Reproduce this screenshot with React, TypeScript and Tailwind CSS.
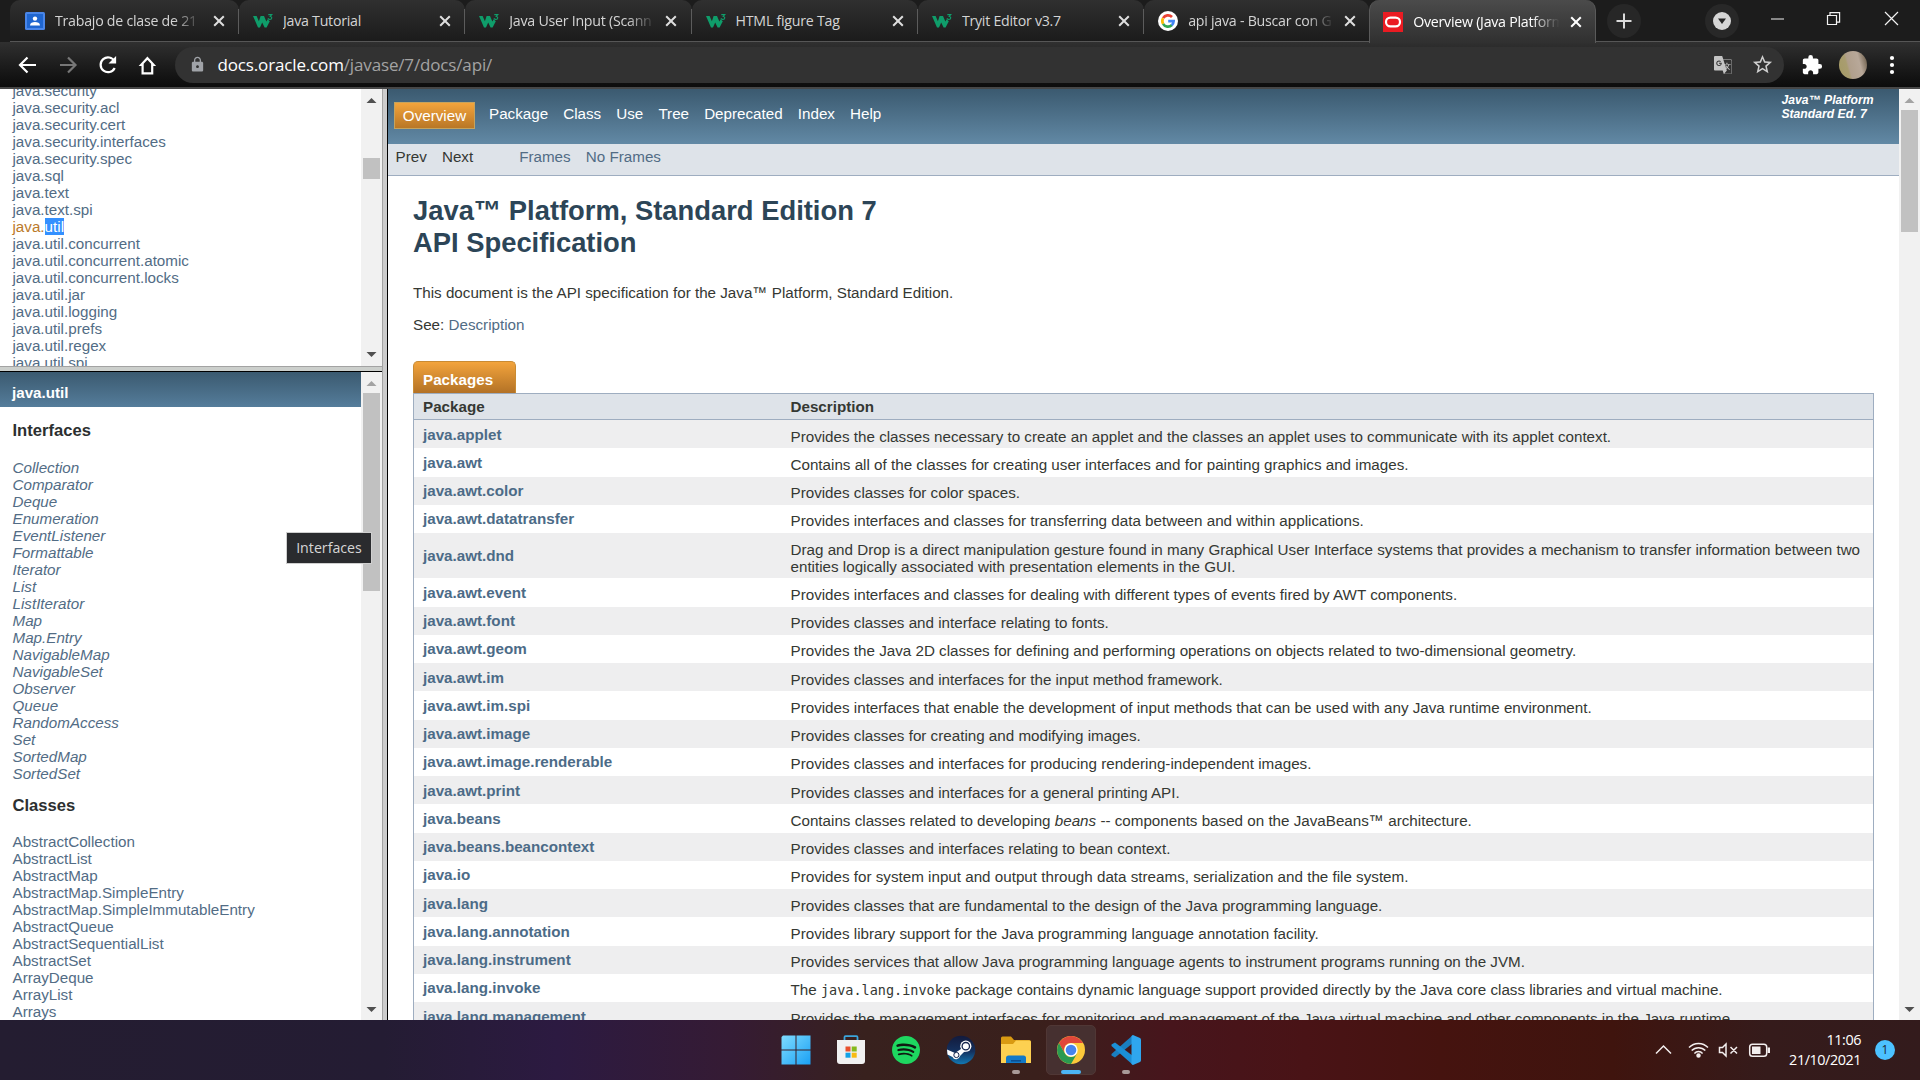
import type { ReactNode } from "react";
import { SiSpotify, SiGoogletranslate } from "react-icons/si";
import { MdExtension, MdStarBorder, MdLock } from "react-icons/md";

const packages = [
  "java.security", "java.security.acl", "java.security.cert", "java.security.interfaces", "java.security.spec",
  "java.sql", "java.text", "java.text.spi", "java.util", "java.util.concurrent", "java.util.concurrent.atomic",
  "java.util.concurrent.locks", "java.util.jar", "java.util.logging", "java.util.prefs", "java.util.regex", "java.util.spi",
];
const interfaces = [
  "Collection", "Comparator", "Deque", "Enumeration", "EventListener", "Formattable", "Iterator", "List", "ListIterator",
  "Map", "Map.Entry", "NavigableMap", "NavigableSet", "Observer", "Queue", "RandomAccess", "Set", "SortedMap", "SortedSet",
];
const classes = [
  "AbstractCollection", "AbstractList", "AbstractMap", "AbstractMap.SimpleEntry", "AbstractMap.SimpleImmutableEntry",
  "AbstractQueue", "AbstractSequentialList", "AbstractSet", "ArrayDeque", "ArrayList", "Arrays",
];
const rows: [string, ReactNode][] = [
  ["java.applet", "Provides the classes necessary to create an applet and the classes an applet uses to communicate with its applet context."],
  ["java.awt", "Contains all of the classes for creating user interfaces and for painting graphics and images."],
  ["java.awt.color", "Provides classes for color spaces."],
  ["java.awt.datatransfer", "Provides interfaces and classes for transferring data between and within applications."],
  ["java.awt.dnd", "Drag and Drop is a direct manipulation gesture found in many Graphical User Interface systems that provides a mechanism to transfer information between two entities logically associated with presentation elements in the GUI."],
  ["java.awt.event", "Provides interfaces and classes for dealing with different types of events fired by AWT components."],
  ["java.awt.font", "Provides classes and interface relating to fonts."],
  ["java.awt.geom", "Provides the Java 2D classes for defining and performing operations on objects related to two-dimensional geometry."],
  ["java.awt.im", "Provides classes and interfaces for the input method framework."],
  ["java.awt.im.spi", "Provides interfaces that enable the development of input methods that can be used with any Java runtime environment."],
  ["java.awt.image", "Provides classes for creating and modifying images."],
  ["java.awt.image.renderable", "Provides classes and interfaces for producing rendering-independent images."],
  ["java.awt.print", "Provides classes and interfaces for a general printing API."],
  ["java.beans", <>Contains classes related to developing <i>beans</i> -- components based on the JavaBeans™ architecture.</>],
  ["java.beans.beancontext", "Provides classes and interfaces relating to bean context."],
  ["java.io", "Provides for system input and output through data streams, serialization and the file system."],
  ["java.lang", "Provides classes that are fundamental to the design of the Java programming language."],
  ["java.lang.annotation", "Provides library support for the Java programming language annotation facility."],
  ["java.lang.instrument", "Provides services that allow Java programming language agents to instrument programs running on the JVM."],
  ["java.lang.invoke", <>The <code className="font-['DejaVu_Sans_Mono',monospace] text-[13.5px]">java.lang.invoke</code> package contains dynamic language support provided directly by the Java core class libraries and virtual machine.</>],
  ["java.lang.management", "Provides the management interfaces for monitoring and management of the Java virtual machine and other components in the Java runtime."],
];

function W3() {
  return (
    <svg viewBox="0 0 20 18" className="h-[18px] w-5 shrink-0" fill="none">
      <path d="M0 4H3.6L5.9 9.2L7.6 4H11L13.4 9.4L14.6 7.2L16.8 9.2L13.6 15.4H11.6L9.2 10.4L7 15.4H5Z" fill="#0f9d6a" />
      <path d="M15.3 2.6H18.8L17.2 4.4C19.4 4.8 19.2 7.4 16.9 7.4C15.9 7.4 15.3 6.900 15 6.200" stroke="#0f9d6a" strokeWidth="1.1" />
    </svg>
  );
}
function Classroom() {
  return (
    <svg viewBox="0 0 20 18" className="h-[18px] w-5 shrink-0">
      <rect width="20" height="18" rx="1.5" fill="#4a86e8" />
      <rect x="2" y="2" width="16" height="14" fill="#1f66d0" />
      <circle cx="10" cy="6.6" r="2.2" fill="#fff" />
      <path d="M5 13.4C5 9 15 9 15 13.4Z" fill="#fff" />
    </svg>
  );
}
function Google() {
  return (
    <svg viewBox="0 0 20 20" className="size-5 shrink-0" fill="none">
      <circle cx="10" cy="10" r="10" fill="#fff" />
      <g strokeWidth="2.7">
        <path d="M5.1 7.2A5.6 5.6 0 0 1 14 6" stroke="#ea4335" />
        <path d="M5.1 12.8A5.6 5.6 0 0 1 5.1 7.2" stroke="#fbbc05" />
        <path d="M13.9 14A5.6 5.6 0 0 1 5.1 12.8" stroke="#34a853" />
        <path d="M10.2 10.2H15.6A5.6 5.6 0 0 1 13.7 14.2" stroke="#4285f4" />
      </g>
    </svg>
  );
}
function Oracle() {
  return (
    <svg viewBox="0 0 20 20" className="size-5 shrink-0">
      <rect width="20" height="20" fill="#ea1b22" />
      <rect x="3" y="5.6" width="14" height="8.8" rx="4.4" fill="none" stroke="#fff" strokeWidth="2.2" />
    </svg>
  );
}
function Cross({ className }: { className: string }) {
  return (
    <svg viewBox="0 0 12 12" className={`size-3 shrink-0 ${className}`} stroke="currentColor" strokeWidth="2">
      <path d="M1.2 1.2L10.8 10.8M10.8 1.2L1.2 10.8" />
    </svg>
  );
}

const tabs = [
  { icon: <Classroom />, title: "Trabajo de clase de 21", fade: true },
  { icon: <W3 />, title: "Java Tutorial", fade: false },
  { icon: <W3 />, title: "Java User Input (Scann", fade: true },
  { icon: <W3 />, title: "HTML figure Tag", fade: false },
  { icon: <W3 />, title: "Tryit Editor v3.7", fade: false },
  { icon: <Google />, title: "api java - Buscar con G", fade: true },
];

function TabBody({ icon, title, fade }: { icon: ReactNode; title: string; fade: boolean }) {
  return (
    <>
      {icon}
      <span className={`ml-[10px] w-[148px] shrink-0 overflow-hidden whitespace-nowrap ${fade ? "[mask-image:linear-gradient(to_right,black_80%,transparent_99%)]" : ""}`}>
        {title}
      </span>
    </>
  );
}

function TabStrip() {
  return (
    <div className="flex h-[42px] bg-[#1c1c1c] pl-[10px] text-[14.2px] tracking-[-0.25px] text-[#d4d4d4]">
      {tabs.map((t, i) => (
        <div
          key={t.title}
          className={`relative flex h-[42px] shrink-0 items-center rounded-t-[10px] border-b border-[#565656] bg-linear-to-b from-[#303030] to-[#1b1b1b] ${i === 0 ? "w-[229px] pl-[15px]" : i === 5 ? "w-[225px] pl-[14px]" : "w-[226.3px] pl-[14px]"}`}
        >
          <TabBody {...t} />
          <Cross className={i === 0 ? "ml-[10px] text-[#dedede]" : "ml-2 text-[#dedede]"} />
          {i < 5 && <span className="absolute right-0 top-[9px] h-[25px] w-px bg-[#5c5c5c]" />}
        </div>
      ))}
      <div className="relative z-10 flex h-[43px] w-[227px] shrink-0 items-center rounded-t-[10px] border-x border-[#5a5a5a] bg-linear-to-b from-[#4b4b4b] to-[#303030] pl-[13px] text-white">
        <TabBody icon={<Oracle />} title="Overview (Java Platform" fade />
        <Cross className="ml-[9px] text-white" />
      </div>
      <div className="flex flex-1 border-b border-[#565656]">
        <div className="ml-[11px] mt-1 flex size-[34px] items-center justify-center rounded-full bg-[#272727]">
          <svg viewBox="0 0 16 16" className="size-4" stroke="#dadada" strokeWidth="2"><path d="M8 0.5V15.5M0.5 8H15.5" /></svg>
        </div>
        <div className="ml-[64px] mt-1 flex size-[34px] items-center justify-center rounded-full bg-[#282828]">
          <svg viewBox="0 0 18 18" className="size-[18px]"><circle cx="9" cy="9" r="9" fill="#d6d6d6" /><path d="M5 6.4H13L9 12Z" fill="#262626" /></svg>
        </div>
        <svg viewBox="0 0 130 16" className="ml-[32px] mt-[11px] h-4 w-[130px]" stroke="#f2f2f2" strokeWidth="1.2" fill="none">
          <path d="M0 8H13M114 1L127 14M127 1L114 14" />
          <path d="M56.5 4.5H65.5V13.5H56.5ZM59 4V1.6H68.6V11.2H66" />
        </svg>
      </div>
    </div>
  );
}

function Toolbar() {
  return (
    <div className="flex h-[47px] items-center border-b-2 border-[#474747] bg-linear-to-b from-[#303030] to-[#0c0c0c]">
      <svg viewBox="0 0 150 24" className="ml-[14px] h-6 w-[150px]" fill="none" strokeWidth="2.2">
        <path d="M22 12H6.5M13.5 4.5L6 12L13.5 19.5" stroke="#fff" />
        <path d="M46 12H61M54 4.5L61.5 12L54 19.5" stroke="#777" />
        <path d="M100.500 8.2A7.4 7.4 0 1 0 100.700 15" stroke="#fff" />
        <path d="M102.100 3V10.6H94.500Z" fill="#fff" />
        <path d="M127.200 11.8H128.6V20.3H138.2V11.8H139.6L133.4 5.2Z" stroke="#fff" />
      </svg>
      <div className="ml-[11px] flex h-[36px] w-[1609px] items-center rounded-full bg-[#323232]">
        <MdLock className="ml-[14px] size-[17px] text-[#a0a3a8]" />
        <span className="ml-[11.5px] text-[17px] leading-[22px] tracking-[-0.15px] text-white">
          docs.oracle.com<span className="text-[#a3a3a3]">/javase/7/docs/api/</span>
        </span>
        <SiGoogletranslate className="ml-auto size-[18px] text-[#c4c4c4]" />
        <MdStarBorder className="ml-[19px] mr-[10px] size-[23px] text-[#cfcfcf]" />
      </div>
      <MdExtension className="ml-[17px] size-[22px] text-white" />
      <div className="ml-[16px] size-7 rounded-full bg-[linear-gradient(75deg,#a49a64_0%,#a99d70_32%,#b09f8c_38%,#b8a899_70%,#5e503c_100%)]" />
      <svg viewBox="0 0 6 20" className="ml-[22px] h-5 w-[6px]" fill="#fff"><circle cx="3" cy="3" r="2.1" /><circle cx="3" cy="10" r="2.1" /><circle cx="3" cy="17" r="2.1" /></svg>
    </div>
  );
}

function ScrollBar({ gap, thumb, upDisabled, downY }: { gap: number; thumb: number; upDisabled?: boolean; downY?: string }) {
  return (
    <div className="flex w-[21px] shrink-0 flex-col items-center bg-[#f1f1f1]">
      <svg viewBox="0 0 21 21" className="size-[21px] shrink-0"><path d="M5.5 14L10.5 9L15.5 14Z" fill={upDisabled ? "#a3a3a3" : "#505050"} /></svg>
      <div className="w-[17px] bg-[#c1c1c1]" style={{ marginTop: gap, height: thumb }} />
      <svg viewBox="0 0 21 21" className={`mt-auto size-[21px] shrink-0 ${downY ?? ""}`}><path d="M5.5 8L10.5 13L15.5 8Z" fill="#505050" /></svg>
    </div>
  );
}

function LeftColumn() {
  return (
    <div className="relative flex w-[382px] shrink-0 flex-col text-[#526c85]">
      <div className="flex h-[277px] shrink-0 overflow-hidden bg-white">
        <ul className="-mt-[7px] flex-1 pl-[12.5px] leading-[17px]">
          {packages.map((p) => (
            <li key={p}>
              {p === "java.util" ? (
                <span className="text-[#bb7a2a]">java.<span className="inline-block h-[17px] bg-[#3390ff] text-white">util</span></span>
              ) : p}
            </li>
          ))}
        </ul>
        <ScrollBar gap={48} thumb={21} downY="mb-px" />
      </div>
      <div className="h-[6px] shrink-0 border-b border-t border-b-black border-t-[#a3a3a3] bg-[#cccfcc]" />
      <div className="flex min-h-0 flex-1 overflow-hidden bg-white">
        <div className="flex-1">
          <div className="h-[35px] bg-linear-to-b from-[#3b5a70] to-[#557d9b] pl-3 pt-3 font-bold leading-[17px] text-white">java.util</div>
          <div className="pl-[12.500px]">
            <h2 className="pt-[14px] text-[16.6px] font-bold leading-[19px] text-[#2c2f30]">Interfaces</h2>
            <ul className="mt-[19px] italic leading-[17px]">{interfaces.map((p) => <li key={p}>{p}</li>)}</ul>
            <h2 className="mt-[14px] text-[16.6px] font-bold leading-[19px] text-[#2c2f30]">Classes</h2>
            <ul className="mt-[18px] leading-[17px]">{classes.map((p) => <li key={p}>{p}</li>)}</ul>
          </div>
        </div>
        <ScrollBar gap={0} thumb={198} upDisabled />
      </div>
      <div className="absolute left-[286px] top-[443px] flex h-[32px] w-[86px] items-center justify-center border border-[#cfcfcf] bg-[#2a2b2e] font-['Open_Sans','Noto_Sans',sans-serif] text-[14.2px] text-[#d6d6d6]">
        Interfaces
      </div>
    </div>
  );
}

function Main() {
  return (
    <div className="min-w-0 flex-1 overflow-hidden bg-white text-[#353833]">
      <div className="flex h-[55px] bg-linear-to-b from-[#3b5a70] to-[#6289a5] text-white">
        <span className="ml-[6px] mt-[13px] h-[27px] w-[81px] border border-[#c5a35e] bg-linear-to-b from-[#f3a43c] to-[#b97726] pt-[4px] text-center leading-[17px]">Overview</span>
        <div className="ml-[14px] mt-[16px] flex gap-[15.100px] leading-[17px]">
          {["Package", "Class", "Use", "Tree", "Deprecated", "Index", "Help"].map((n) => <span key={n}>{n}</span>)}
        </div>
        <p className="ml-auto mr-[25.5px] mt-[4px] text-[12.2px] font-bold italic leading-[14px]">Java™ Platform<br />Standard Ed. 7</p>
      </div>
      <div className="flex h-[32px] border-b border-[#9eadc0] bg-[#dee3e9] pl-[7.500px] pt-[4px] leading-[17px]">
        <span>Prev</span><span className="ml-[15.200px]">Next</span>
        <span className="ml-[46px] text-[#526c85]">Frames</span><span className="ml-[15.200px] text-[#526c85]">No Frames</span>
      </div>
      <div className="ml-[25px] mr-[25px]">
        <h1 className="pt-[19px] text-[27.36px] font-bold leading-[32px] text-[#2c4557]">Java™ Platform, Standard Edition 7<br />API Specification</h1>
        <p className="mt-[25px] leading-[17px]">This document is the API specification for the Java™ Platform, Standard Edition.</p>
        <p className="mt-[15px] leading-[17px]">See: <span className="text-[#526c85]">Description</span></p>
        <div className="mt-[28px] h-[32px] w-[103px] rounded-t-[5px] border border-b-0 border-[#c98b33] bg-linear-to-b from-[#f3a43c] to-[#b37226] pl-[9px] pt-[9px] font-bold leading-[17px] text-white">Packages</div>
        <div className="border-x border-t border-[#9eadc0]">
          <div className="grid h-[26px] grid-cols-[367.5px_1fr] border-b border-[#9eadc0] bg-[#dee3e9] pl-[9px] pt-[4px] font-bold leading-[17px]">
            <span>Package</span><span>Description</span>
          </div>
          {rows.map(([name, text], i) => (
            <div key={name} className={`grid grid-cols-[367.5px_1fr] items-center pl-[9px] pr-[10px] leading-[17px] ${i % 2 ? "bg-white" : "bg-[#eeeeef]"} ${i === 4 ? "h-[45.25px]" : "h-[28.25px]"}`}>
              <b className="text-[#4c6b87]">{name}</b>
              <span className="pt-[4px]">{text}</span>
            </div>
          ))}
        </div>
      </div>
    </div>
  );
}

function TaskIcon({ children, mark }: { children: ReactNode; mark?: "on" | "idle" }) {
  return (
    <div className={`relative flex h-[50px] w-[50px] items-center justify-center rounded-[5px] ${mark === "on" ? "border border-[#503735] bg-[#463030]" : ""}`}>
      <svg viewBox="0 0 30 30" className="size-[30px]">{children}</svg>
      {mark === "on" && <span className="absolute bottom-0 h-1 w-5 rounded-full bg-[#4cb4f4]" />}
      {mark === "idle" && <span className="absolute bottom-[1px] h-1 w-2 rounded-full bg-[#a89a98]" />}
    </div>
  );
}

function Taskbar() {
  return (
    <div className="flex h-[60px] items-center bg-[linear-gradient(90deg,#241d31_0%,#241c33_20%,#2c1a41_29%,#351b34_38%,#38211e_45%,#3a201c_54%,#47151c_61%,#491316_68%,#45130f_75%,#3f140e_84%,#351b1b_92%,#331b1c_100%)]">
      <div className="ml-[770.6px] flex gap-[5.1px]">
        <TaskIcon>
          <defs><linearGradient id="win" x1="0" y1="0" x2="1" y2="1" gradientUnits="objectBoundingBox"><stop stopColor="#7fdcff" /><stop offset="1" stopColor="#1aa0f4" /></linearGradient></defs>
          <path fill="url(#win)" d="M2 0.5H14.5V14.5H0.5V2ZM15.5 0.5H29.5V14.5H15.5ZM0.5 15.5H14.5V29.5H0.5ZM15.5 15.5H29.5V29.5H15.5Z" />
        </TaskIcon>
        <TaskIcon>
          <path d="M8.5 7V2.2Q8.5 1.2 9.5 1.2H20.5Q21.5 1.2 21.5 2.2V7" fill="none" stroke="#3ba5dc" strokeWidth="1.8" />
          <path d="M1 5H29V26Q29 29 26 29H4Q1 29 1 26Z" fill="#f1f1f1" />
          <path d="M9.5 11.5H14.5V16.5H9.5Z" fill="#e8502d" /><path d="M15.7 11.5H20.7V16.5H15.7Z" fill="#85b91c" />
          <path d="M9.5 17.7H14.5V22.7H9.5Z" fill="#12a2e6" /><path d="M15.7 17.7H20.7V22.7H15.7Z" fill="#f8bb13" />
        </TaskIcon>
        <TaskIcon>
          <circle cx="15" cy="15" r="11" fill="#101a12" />
          <g transform="translate(1 1)"><SiSpotify size={28} color="#1ed760" /></g>
        </TaskIcon>
        <TaskIcon>
          <defs><linearGradient id="steam" x1="0" y1="0" x2="0" y2="1"><stop stopColor="#131a3c" /><stop offset=".55" stopColor="#14315e" /><stop offset="1" stopColor="#1279b4" /></linearGradient></defs>
          <circle cx="15" cy="15" r="14.3" fill="url(#steam)" />
          <path d="M1 14.5L9 18L15 14L16 9L25 10L23 15L18 17L14 21A4 4 0 0 1 6.5 22L1.5 19.5Z" fill="#fff" />
          <circle cx="19.8" cy="11.2" r="5.6" fill="#fff" /><circle cx="19.8" cy="11.2" r="3.7" fill="#fff" stroke="#17264e" strokeWidth="1.3" />
          <circle cx="10.4" cy="20" r="2.6" fill="none" stroke="#17264e" strokeWidth="1" />
        </TaskIcon>
        <TaskIcon mark="idle">
          <path d="M0 3Q0 1.5 1.5 1.5H10L13 5H28Q30 5 30 7V20H0Z" fill="#d99a12" />
          <path d="M0 9H12L15 5.5H28.5Q30 5.5 30 7V28H0Z" fill="#fdd051" />
          <path d="M5 28V23Q5 20.5 7.5 20.5H22.5Q25 20.5 25 23V28Z" fill="#1279c8" /><path d="M10 25.8H20" stroke="#0b4f92" strokeWidth="1.6" />
        </TaskIcon>
        <TaskIcon mark="on">
          <circle cx="15" cy="15" r="14" fill="#fcc93a" />
          <path d="M2.9 8A14 14 0 0 1 27.1 8H15A7 7 0 0 0 8.9 18.5Z" fill="#e0473a" />
          <path d="M2.9 8A14 14 0 0 0 15 29L21.1 18.5A7 7 0 0 1 8.9 18.5Z" fill="#2a9a50" />
          <circle cx="15" cy="15" r="6.7" fill="#fff" /><circle cx="15" cy="15" r="5.3" fill="#4784ee" />
        </TaskIcon>
        <TaskIcon mark="idle">
          <path d="M22 0L22 8L4 22.5L0.5 20.5V19Z" fill="#1a7ec0" />
          <path d="M22 30L22 21L4 7.5L0.5 9.5V11Z" fill="#1b8fd6" />
          <path d="M22 0L29 3Q30 3.5 30 5V25Q30 26.5 29 27L22 30L20.5 29V1Z" fill="#2fa6ee" />
        </TaskIcon>
      </div>
      <div className="ml-auto flex items-center">
        <svg viewBox="0 0 116 20" className="h-5 w-[116px]" fill="none" stroke="#f3eeee" strokeWidth="1.5">
          <path d="M1 13.5L8.5 6L16 13.5" />
          <path d="M34 7.6A13.2 13.2 0 0 1 53 7.6M36.7 10.6A9.4 9.4 0 0 1 50.3 10.6M39.4 13.4A5.6 5.6 0 0 1 47.6 13.4" />
          <circle cx="43.5" cy="15.5" r="1.5" fill="#f3eeee" />
          <path d="M64.5 7.5H67.5L71 4V16L67.5 12.5H64.5ZM75.5 7L82 13.5M82 7L75.5 13.5" />
          <rect x="94.7" y="4.2" width="17" height="12" rx="2.8" /><path d="M97 6.500H105.500V14H97Z" fill="#f3eeee" stroke="none" /><path d="M113.800 7.5V13" strokeWidth="2.4" />
        </svg>
        <div className="ml-[15px] w-[75px] text-right text-[14.4px] leading-5 tracking-[-0.45px] text-white">11:06<br />21/10/2021</div>
        <span className="ml-[14px] mr-[25px] flex size-5 items-center justify-center rounded-full bg-[#4cc2ff] text-[12px] text-[#1c2a33]">1</span>
      </div>
    </div>
  );
}

export default function App() {
  return (
    <div className="flex h-[1080px] w-[1920px] flex-col overflow-hidden bg-white font-['Open_Sans','Noto_Sans',sans-serif]">
      <TabStrip />
      <Toolbar />
      <div className="flex min-h-0 flex-1 font-['Liberation_Sans',Arial,sans-serif] text-[15.2px]">
        <LeftColumn />
        <div className="w-[6px] shrink-0 border-l border-r border-l-[#a3a3a3] border-r-black bg-[#cccccc]" />
        <Main />
        <ScrollBar gap={0} thumb={122} upDisabled />
      </div>
      <Taskbar />
    </div>
  );
}
